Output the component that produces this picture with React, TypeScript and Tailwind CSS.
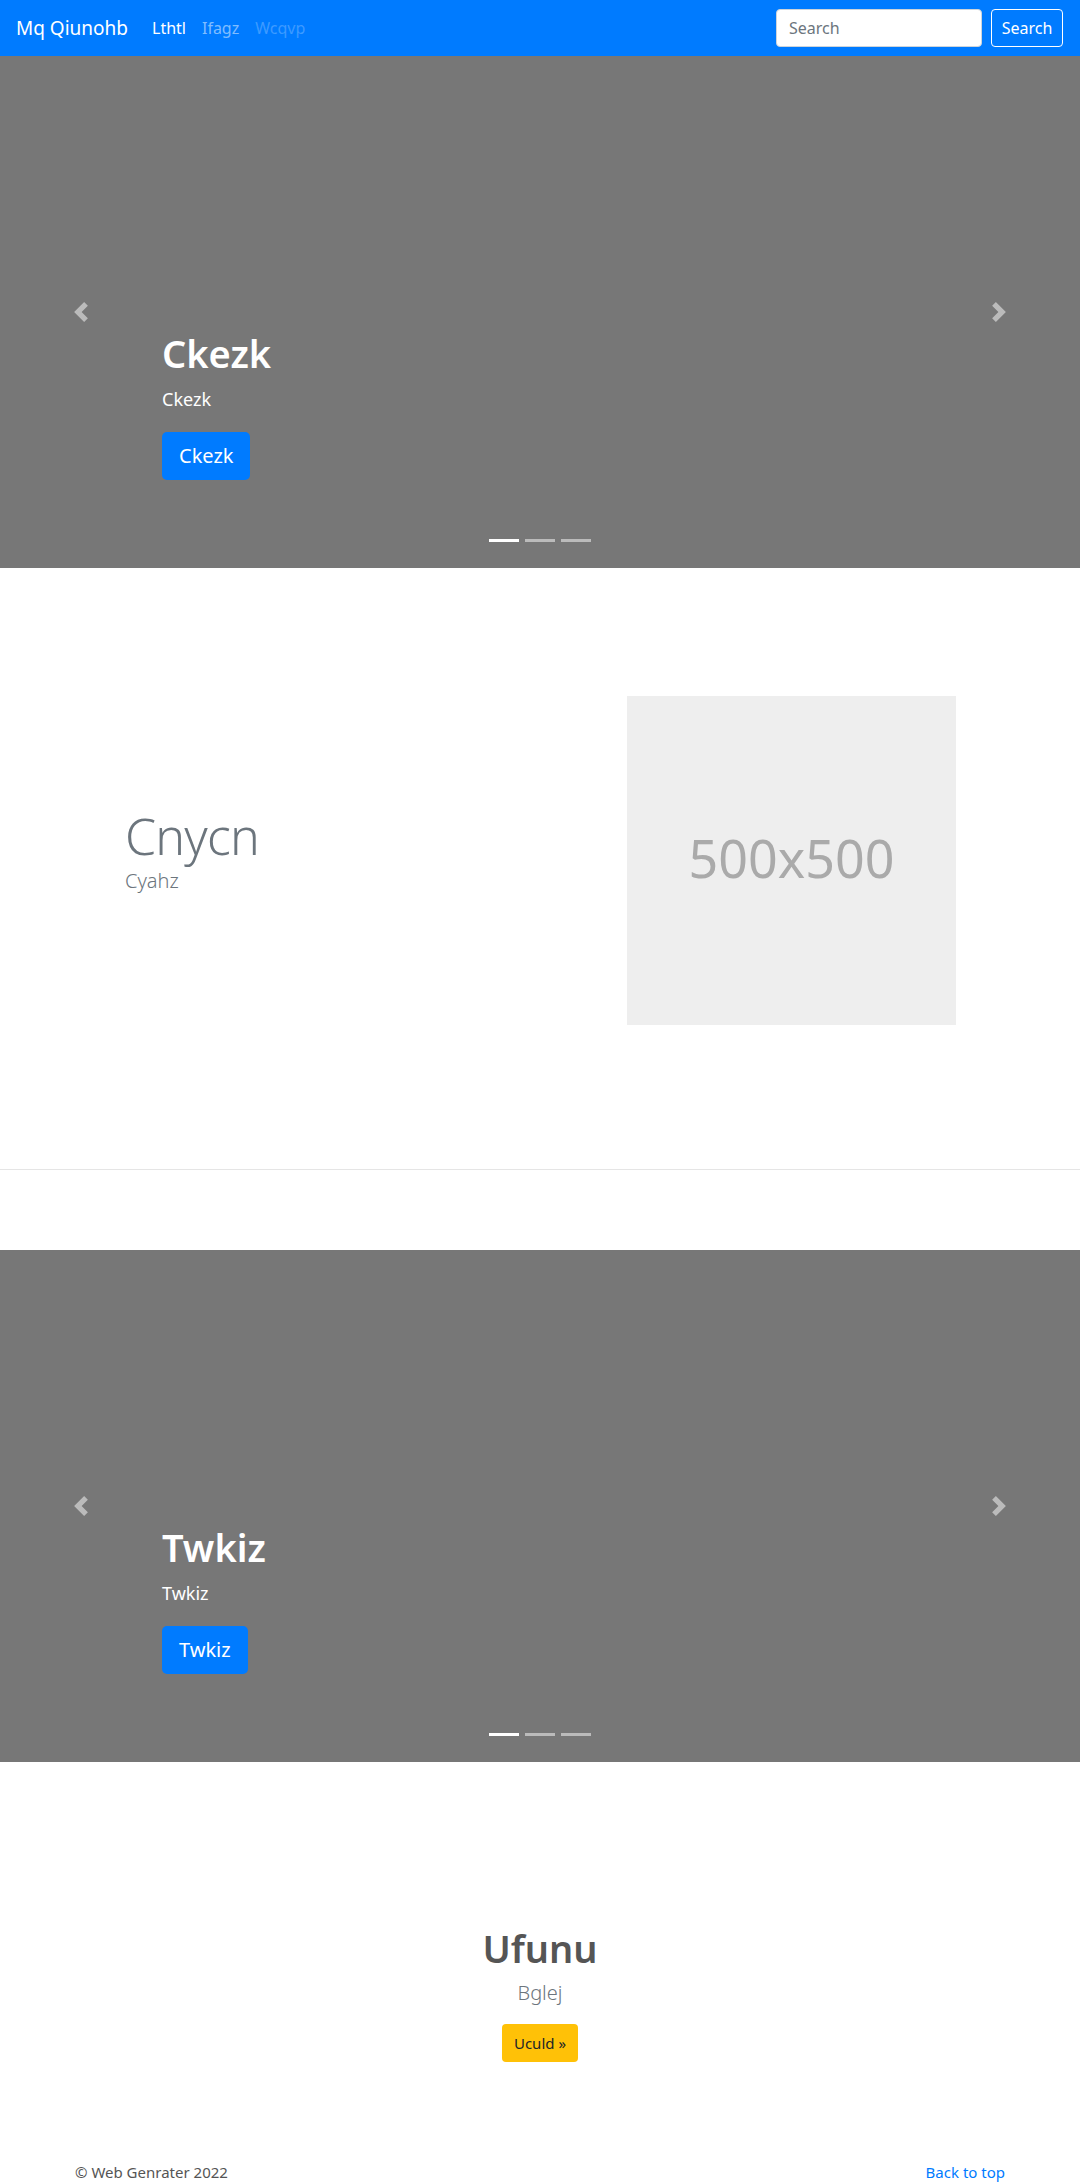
import React from "react";

const font = { fontFamily: '"Noto Sans", "Open Sans", Arial, sans-serif' };

function Chevron({ dir }: { dir: "left" | "right" }) {
  return (
    <svg width="20" height="20" viewBox="0 0 8 8" fill="#fff" opacity={0.5}>
      {dir === "left" ? (
        <path d="M5.25 0l-4 4 4 4 1.5-1.5L4.25 4l2.5-2.5L5.25 0z" />
      ) : (
        <path d="M2.75 0l-1.5 1.5L3.75 4l-2.5 2.5L2.75 8l4-4-4-4z" />
      )}
    </svg>
  );
}

function Carousel({ title }: { title: string }) {
  return (
    <div className="relative h-[512px] bg-[#777777] flex flex-col justify-end pl-[162px] pb-[88px]">
      <div className="absolute left-[71px] top-[246px]">
        <Chevron dir="left" />
      </div>
      <div className="absolute right-[71px] top-[246px]">
        <Chevron dir="right" />
      </div>
      <h1 className="text-[38px] leading-[48px] font-semibold text-white mb-[9px]">{title}</h1>
      <p className="text-[18px] leading-[27px] text-white mb-[19px]">{title}</p>
      <div>
        <button className="h-[48px] px-[17px] rounded-[5px] bg-[#007bff] text-white text-[20px] leading-[30px]">
          {title}
        </button>
      </div>
      <div className="absolute left-0 right-0 bottom-[26px] flex justify-center gap-[6px]">
        <span className="block w-[30px] h-[3px] bg-white" />
        <span className="block w-[30px] h-[3px] bg-white/50" />
        <span className="block w-[30px] h-[3px] bg-white/50" />
      </div>
    </div>
  );
}

export default function App() {
  return (
    <div style={font} className="bg-white text-[#212529] w-[1080px]">
      <nav className="h-[56px] bg-[#007bff] flex items-center pl-[16px] pr-[17px]">
        <span className="text-white text-[19px] leading-[30px] mr-[24px]">Mq Qiunohb</span>
        <div className="flex gap-[16px] text-[16px]">
          <span className="text-white">Lthtl</span>
          <span className="text-white/50">Ifagz</span>
          <span className="text-white/25">Wcqvp</span>
        </div>
        <div className="ml-auto flex items-center gap-[9px]">
          <div className="w-[206px] h-[38px] bg-white rounded-[4px] border border-[#ced4da] flex items-center px-[12px] text-[16px] text-[#6c757d]">
            Search
          </div>
          <div className="w-[72px] h-[38px] rounded-[4px] border border-white flex items-center justify-center text-white text-[16px]">
            Search
          </div>
        </div>
      </nav>

      <Carousel title="Ckezk" />

      <div className="w-[960px] mx-auto pt-[128px] pb-[64px] flex items-center">
        <div className="flex-1 pl-[65px] pb-[20px]">
          <h2 className="text-[50px] leading-[60px] font-light tracking-[-0.8px] text-[#6c757d]">Cnycn</h2>
          <p className="text-[20px] leading-[30px] font-light text-[#6c757d]">Cyahz</p>
        </div>
        <div className="w-[329px] h-[329px] bg-[#eeeeee] mr-[64px] flex items-center justify-center pb-[6px]">
          <span className="text-[52px] text-[#aaaaaa]">500x500</span>
        </div>
      </div>

      <div className="w-[1080px] h-[80px]" />
      <hr className="border-t border-[#e5e5e5]" />
      <div className="h-[80px]" />

      <Carousel title="Twkiz" />

      <div className="pt-[162px] flex flex-col items-center">
        <h2 className="text-[38px] leading-[48px] font-semibold text-[#555555]">Ufunu</h2>
        <p className="text-[20px] leading-[30px] font-light text-[#6c757d] mt-[6px]">Bglej</p>
        <button className="mt-[16px] h-[38px] px-[12px] rounded-[4px] bg-[#ffc107] text-[#212529] text-[15px]">
          Uculd »
        </button>
      </div>

      <footer className="w-[930px] mx-auto mt-[98px] flex justify-between text-[15px] leading-[24px]">
        <span className="text-[#555555]">© Web Genrater 2022</span>
        <span className="text-[#007bff]">Back to top</span>
      </footer>
    </div>
  );
}
